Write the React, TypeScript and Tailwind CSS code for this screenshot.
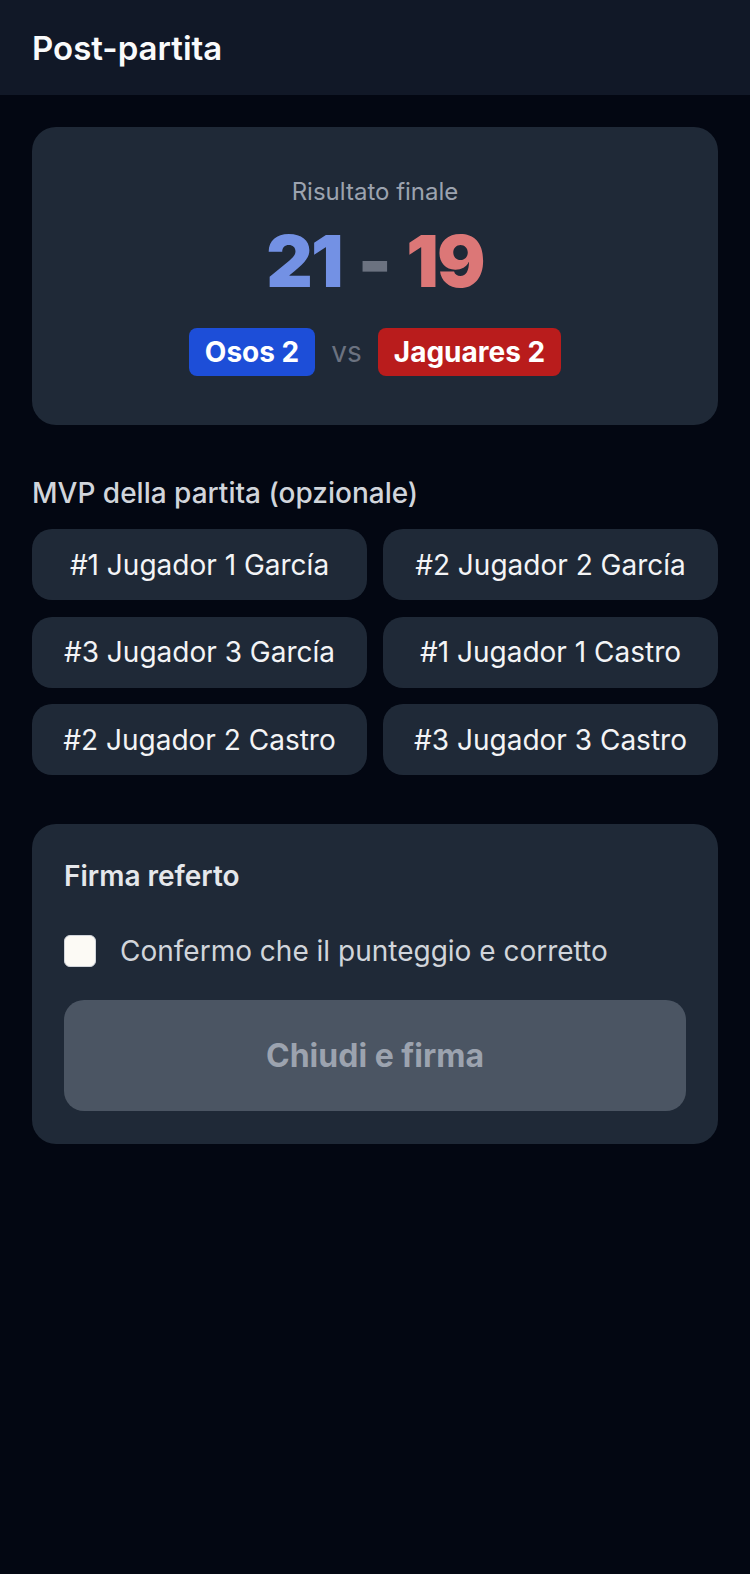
const players = [
  "#1 Jugador 1 García",
  "#2 Jugador 2 García",
  "#3 Jugador 3 García",
  "#1 Jugador 1 Castro",
  "#2 Jugador 2 Castro",
  "#3 Jugador 3 Castro",
];

export default function App() {
  return (
    <div className="min-h-[1574px] bg-[#030712] font-['Inter',sans-serif] text-white">
      {/* Header */}
      <header className="h-[95px] bg-[#111827] px-8 flex items-center">
        <h1 className="text-[33px] leading-[40px] font-semibold text-[#f9fafb]">Post-partita</h1>
      </header>

      <main className="p-8">
        {/* Final score */}
        <section className="rounded-3xl bg-[#1f2937] px-12 pt-[49px] pb-[49px] flex flex-col items-center">
          <span className="text-[24px] leading-[32px] text-[#9ca3af]">Risultato finale</span>
          <div className="mt-[17px] flex items-center gap-4 text-[72px] leading-[72px] font-black tracking-tight">
            <span className="text-[#7391e4]">21</span>
            <span className="text-[#6b7280]">-</span>
            <span className="text-[#dc7777]">19</span>
          </div>
          <div className="mt-[31px] flex items-center gap-4">
            <span className="rounded-lg bg-[#1d4ed8] px-4 py-2 text-[28px] leading-[32px] font-bold text-white">Osos 2</span>
            <span className="text-[28px] leading-[32px] text-[#6b7280]">vs</span>
            <span className="rounded-lg bg-[#b91c1c] px-4 py-2 text-[28px] leading-[32px] font-bold text-white">Jaguares 2</span>
          </div>
        </section>

        {/* MVP */}
        <section className="mt-[48px]">
          <h2 className="text-[28px] leading-[40px] font-medium text-[#d1d5db]">MVP della partita (opzionale)</h2>
          <div className="mt-4 grid grid-cols-2 gap-x-4 gap-y-[16.5px]">
            {players.map((p) => (
              <button
                key={p}
                className="h-[71px] rounded-[20px] bg-[#1f2937] text-[28px] leading-[40px] text-[#f3f4f6]"
              >
                {p}
              </button>
            ))}
          </div>
        </section>

        {/* Sign report */}
        <section className="mt-[49px] rounded-3xl bg-[#1f2937] px-8 pt-8 pb-[33px]">
          <h2 className="text-[28px] leading-[40px] font-semibold text-[#e5e7eb]">Firma referto</h2>
          <label className="mt-[35px] flex items-center gap-6">
            <span className="h-[32px] w-[32px] rounded-md border border-[#d1d5db] bg-[#fcfaf5]" />
            <span className="text-[28px] leading-[40px] text-[#d1d5db]">Confermo che il punteggio e corretto</span>
          </label>
          <button className="mt-[29px] h-[111px] w-full rounded-[20px] bg-[#4b5563] text-[32px] font-bold text-[#9ca3af]">
            Chiudi e firma
          </button>
        </section>
      </main>
    </div>
  );
}
